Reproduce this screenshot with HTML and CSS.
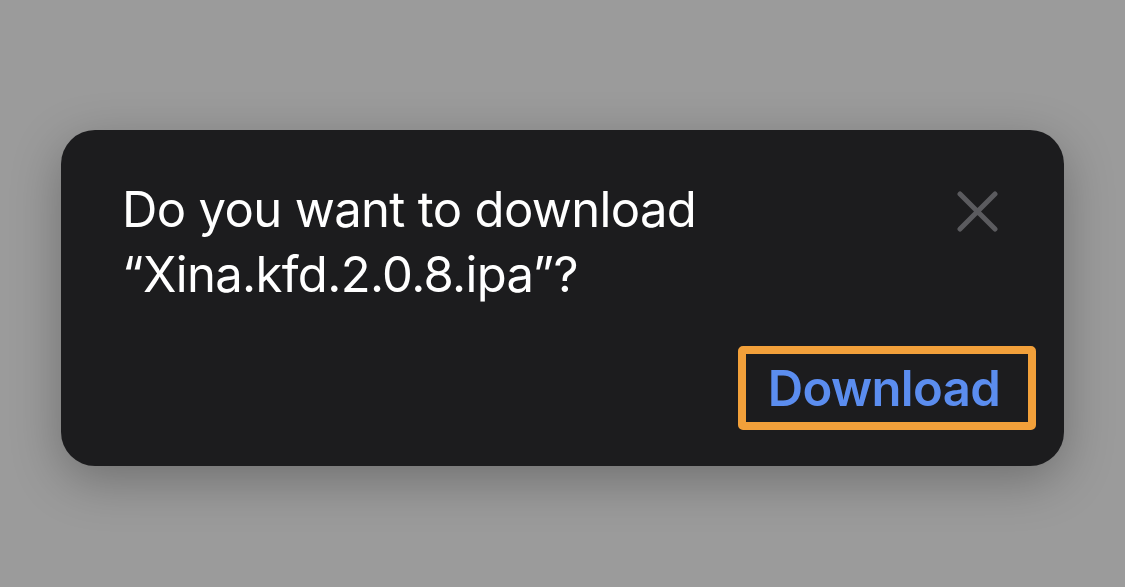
FILE: index.html
```html
<!DOCTYPE html>
<html lang="en">
<head>
    <meta charset="UTF-8">
    <meta name="viewport" content="width=device-width, initial-scale=1.0">
    <title>Download</title>
    <link rel="stylesheet" href="styles.css">
</head>
<body>
    <div class="dialog">
        <div class="dialog-head">
            <p class="message">Do you want to download<br>“Xina.kfd.2.0.8.ipa”?</p>
            <button class="close" aria-label="Close">
                <svg width="41" height="41" viewBox="0 0 41 41">
                    <path d="M3 3 L38 38 M38 3 L3 38" stroke="#5b5b5f" stroke-width="5" stroke-linecap="round" fill="none"/>
                </svg>
            </button>
        </div>
        <div class="dialog-actions">
            <button class="download">Download</button>
        </div>
    </div>
</body>
</html>
```

FILE: styles.css
```css
body {
    margin: 0;
    background-color: #9b9b9b;
    font-family: Inter, "Noto Sans", sans-serif;
    min-height: 100vh;
}
.dialog {
    box-sizing: border-box;
    width: 1003px;
    height: 336px;
    margin: 130px 0 0 61px;
    padding: 47px 28px 36px 61px;
    background-color: #1c1c1e;
    border-radius: 34px;
    box-shadow: 0 14px 50px rgba(0, 0, 0, 0.28);
    display: flex;
    flex-direction: column;
    justify-content: space-between;
}
.dialog-head {
    display: flex;
    justify-content: space-between;
    align-items: flex-start;
    padding-right: 38px;
}
.message {
    margin: 0;
    color: #ffffff;
    font-size: 49px;
    line-height: 65px;
    font-weight: 400;
    letter-spacing: -0.65px;
}
.close {
    margin-top: 14px;
    padding: 0;
    border: none;
    background: none;
    display: flex;
}
.dialog-actions {
    display: flex;
    justify-content: flex-end;
}
.download {
    box-sizing: border-box;
    width: 298px;
    height: 84px;
    padding: 0 6px 0 0;
    border: 8px solid #f2a03a;
    border-radius: 5px;
    background-color: #1c1c1e;
    color: #5b8def;
    font-family: Inter, "Noto Sans", sans-serif;
    font-size: 49px;
    font-weight: 600;
    letter-spacing: -0.6px;
}
```
